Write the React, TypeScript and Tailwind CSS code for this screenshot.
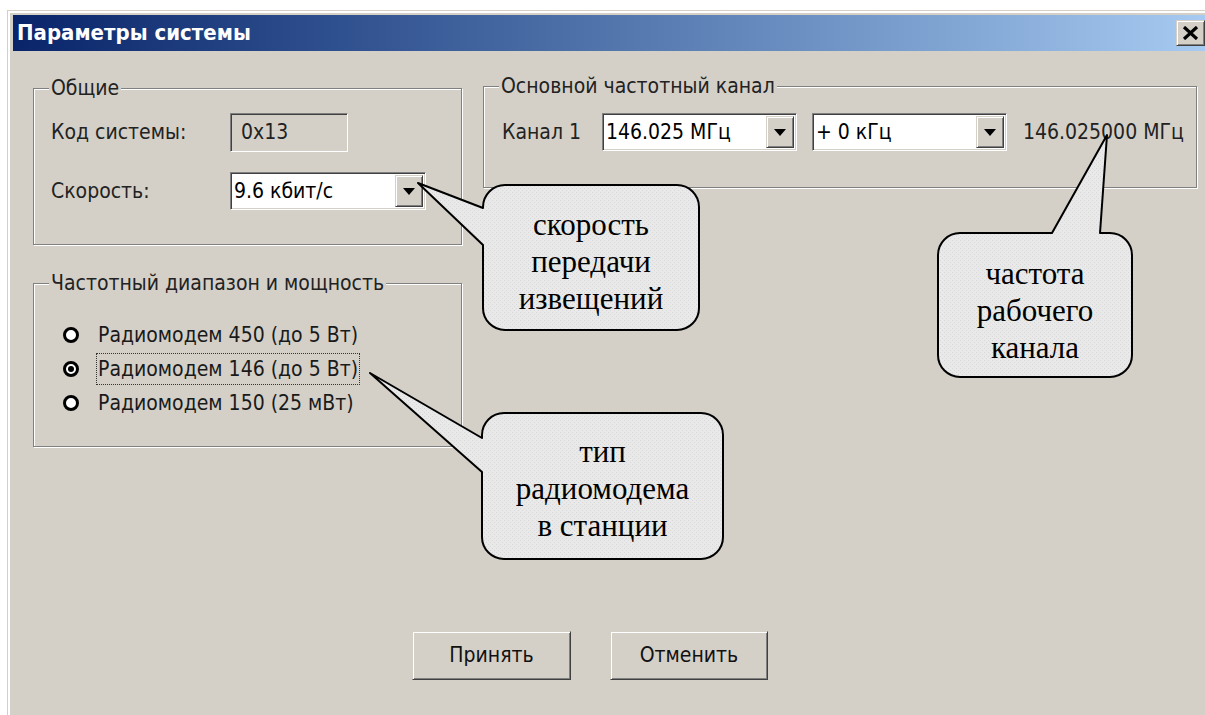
import React from "react";

const face = "font-['DejaVu_Sans_Condensed','DejaVu_Sans',sans-serif]";
const serif = "font-['Liberation_Serif','Times_New_Roman',serif]";
const sunken =
  "border border-t-[#808080] border-l-[#808080] border-b-white border-r-white shadow-[inset_1px_1px_0_#404040,inset_-1px_-1px_0_#d4d0c8]";
const raised =
  "bg-[#d4d0c8] border border-t-[#d4d0c8] border-l-[#d4d0c8] border-b-[#404040] border-r-[#404040] shadow-[inset_1px_1px_0_#ffffff,inset_-1px_-1px_0_#808080]";
const etched =
  "relative border border-[#808080] shadow-[1px_1px_0_#ffffff,inset_1px_1px_0_#ffffff]";

function Arrow() {
  return (
    <svg width="12" height="7" viewBox="0 0 12 7">
      <polygon points="0,0 12,0 6,7" fill="#000" />
    </svg>
  );
}

function Combo({ text, w }: { text: string; w: string }) {
  return (
    <div className={`${sunken} ${w} h-[38px] shrink-0 bg-white flex items-stretch p-[2px]`}>
      <div className="flex-1 flex items-center pl-[1px] text-[21px] text-black leading-none whitespace-nowrap">{text}</div>
      <div className={`${raised} w-[28px] flex items-center justify-center`}>
        <Arrow />
      </div>
    </div>
  );
}

function Legend({ text }: { text: string }) {
  return (
    <span className="absolute -top-[13px] left-[15px] px-[2px] bg-[#d4d0c8] text-[21px] leading-[24px] text-[#222] whitespace-nowrap">
      {text}
    </span>
  );
}

function Radio({ label, checked, focus }: { label: string; checked?: boolean; focus?: boolean }) {
  return (
    <div className="h-[34px] flex items-center">
      <div className="w-[16px] h-[16px] shrink-0 rounded-full border-[3px] border-black bg-white flex items-center justify-center">
        {checked && <div className="w-[6px] h-[6px] rounded-full bg-black" />}
      </div>
      <div
        className={`ml-[17px] h-[32px] flex items-center px-[1px] border border-dotted ${
          focus ? "border-[#333]" : "border-transparent"
        } text-[21px] text-[#1a1a1a] leading-none whitespace-nowrap`}
      >
        {label}
      </div>
    </div>
  );
}

function Bubbles() {
  const r = 22;
  const b1 = { L: 483, T: 185, R: 699, B: 330 };
  const b2 = { L: 938, T: 233, R: 1132, B: 377 };
  const b3 = { L: 482, T: 413, R: 723, B: 559 };
  const p1 = `M ${b1.L + r} ${b1.T} H ${b1.R - r} A ${r} ${r} 0 0 1 ${b1.R} ${b1.T + r} V ${b1.B - r} A ${r} ${r} 0 0 1 ${b1.R - r} ${b1.B} H ${b1.L + r} A ${r} ${r} 0 0 1 ${b1.L} ${b1.B - r} V 245 L 418 183 L ${b1.L} 208 V ${b1.T + r} A ${r} ${r} 0 0 1 ${b1.L + r} ${b1.T} Z`;
  const p2 = `M ${b2.L + r} ${b2.T} H 1052 L 1107 135 L 1100 ${b2.T} H ${b2.R - r} A ${r} ${r} 0 0 1 ${b2.R} ${b2.T + r} V ${b2.B - r} A ${r} ${r} 0 0 1 ${b2.R - r} ${b2.B} H ${b2.L + r} A ${r} ${r} 0 0 1 ${b2.L} ${b2.B - r} V ${b2.T + r} A ${r} ${r} 0 0 1 ${b2.L + r} ${b2.T} Z`;
  const p3 = `M ${b3.L + r} ${b3.T} H ${b3.R - r} A ${r} ${r} 0 0 1 ${b3.R} ${b3.T + r} V ${b3.B - r} A ${r} ${r} 0 0 1 ${b3.R - r} ${b3.B} H ${b3.L + r} A ${r} ${r} 0 0 1 ${b3.L} ${b3.B - r} V 472 L 370 373 L ${b3.L} 438 V ${b3.T + r} A ${r} ${r} 0 0 1 ${b3.L + r} ${b3.T} Z`;
  return (
    <svg className="absolute inset-0 pointer-events-none" width="1205" height="715" viewBox="0 0 1205 715">
      <defs>
        <pattern id="dots" width="4" height="4" patternUnits="userSpaceOnUse">
          <rect width="4" height="4" fill="#e9e9e9" />
          <rect x="0" y="0" width="1" height="1" fill="#d8d8d8" />
          <rect x="2" y="2" width="1" height="1" fill="#d8d8d8" />
        </pattern>
      </defs>
      {[p1, p2, p3].map((d, i) => (
        <path key={i} d={d} fill="url(#dots)" stroke="#000" strokeWidth="2" strokeLinejoin="round" />
      ))}
    </svg>
  );
}

function BubbleText({ lines, cls }: { lines: string[]; cls: string }) {
  return (
    <div className={`absolute ${cls} flex flex-col items-center justify-center ${serif} text-[31px] leading-[37px] text-black`}>
      {lines.map((l) => (
        <div key={l}>{l}</div>
      ))}
    </div>
  );
}

export default function App() {
  return (
    <div className={`relative w-[1205px] h-[715px] overflow-hidden bg-white pl-[7px] pt-[10px] ${face}`}>
      <div className="w-[1202px] h-[705px] bg-[#d4d0c8] pl-[6px] pt-[5px] shadow-[inset_1px_1px_0_#d4d0c8,inset_3px_3px_0_#ffffff]">
        {/* title bar */}
        <div className="h-[36px] mr-[4px] bg-gradient-to-r from-[#0a246a] to-[#a6caf0] flex items-center justify-between pl-[4px]">
          <span className="text-white font-bold text-[22px] leading-none">Параметры системы</span>
          <div className={`${raised} w-[29px] h-[26px] flex items-center justify-center`}>
            <svg width="17" height="14" viewBox="0 0 17 14">
              <path d="M2 1 L15 13 M15 1 L2 13" stroke="#000" strokeWidth="3.2" />
            </svg>
          </div>
        </div>

        {/* body */}
        <div className="pl-[20px] pt-[35px] flex flex-col">
          <div className="flex items-start gap-[21px]">
            {/* left column */}
            <div className="flex flex-col mt-[2px]">
              <div className={`${etched} w-[429px] h-[157px] pt-[24px] pl-[17px]`}>
                <Legend text="Общие" />
                <div className="flex items-center h-[39px]">
                  <div className="w-[179px] text-[21px] text-[#222] leading-none">Код системы:</div>
                  <div className={`${sunken} w-[118px] h-[39px] bg-[#d4d0c8] flex items-center pl-[10px] text-[21px] text-[#222] leading-none`}>
                    0x13
                  </div>
                </div>
                <div className="flex items-center h-[38px] mt-[20px]">
                  <div className="w-[179px] text-[21px] text-[#222] leading-none">Скорость:</div>
                  <Combo text="9.6 кбит/с" w="w-[196px]" />
                </div>
              </div>

              <div className={`${etched} w-[429px] h-[164px] mt-[38px] pt-[34px] pl-[29px]`}>
                <Legend text="Частотный диапазон и мощность" />
                <Radio label="Радиомодем 450 (до 5 Вт)" />
                <Radio label="Радиомодем 146 (до 5 Вт)" checked focus />
                <Radio label="Радиомодем 150 (25 мВт)" />
              </div>
            </div>

            {/* right column */}
            <div className={`${etched} w-[714px] h-[102px] pt-[26px] pl-[18px]`}>
              <Legend text="Основной частотный канал" />
              <div className="flex items-center">
                <div className="w-[100px] shrink-0 text-[21px] text-[#222] leading-none">Канал 1</div>
                <Combo text="146.025 МГц" w="w-[195px]" />
                <div className="w-[15px] shrink-0" />
                <Combo text="+ 0 кГц" w="w-[195px]" />
                <div className="ml-[16px] text-[21px] text-[#222] leading-none whitespace-nowrap">146.025000 МГц</div>
              </div>
            </div>
          </div>

          {/* buttons */}
          <div className="flex gap-[39px] mt-[184px] ml-[379px]">
            <div className={`${raised} w-[159px] h-[49px] flex items-center justify-center text-[21px] text-[#111] leading-none`}>
              Принять
            </div>
            <div className={`${raised} w-[158px] h-[49px] flex items-center justify-center text-[21px] text-[#111] leading-none`}>
              Отменить
            </div>
          </div>
        </div>
      </div>

      <Bubbles />
      <BubbleText lines={["скорость", "передачи", "извещений"]} cls="left-[483px] top-[189px] w-[216px] h-[145px]" />
      <BubbleText lines={["частота", "рабочего", "канала"]} cls="left-[938px] top-[238px] w-[194px] h-[144px]" />
      <BubbleText lines={["тип", "радиомодема", "в станции"]} cls="left-[482px] top-[415px] w-[241px] h-[146px]" />
    </div>
  );
}
